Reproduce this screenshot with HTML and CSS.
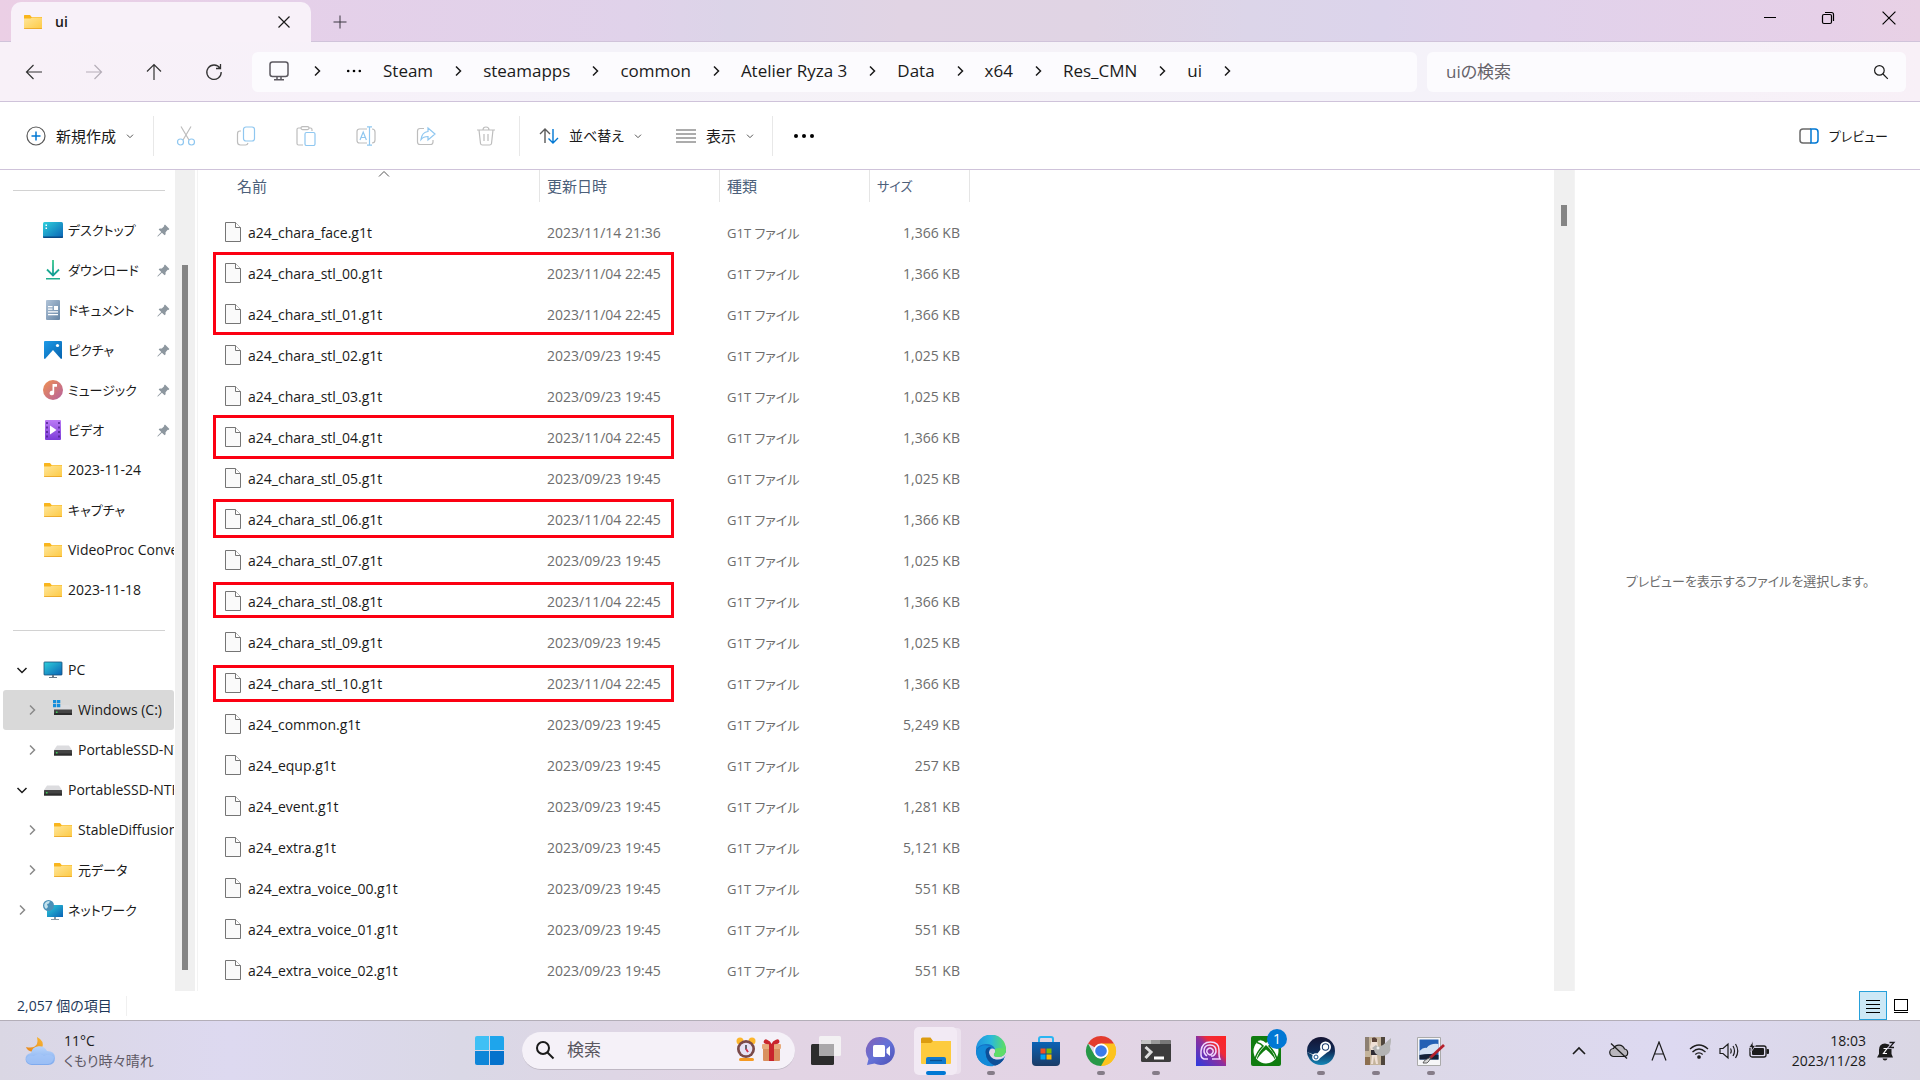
FILE: index.html
```html
<!DOCTYPE html>
<html lang="ja">
<head>
<meta charset="utf-8">
<title>ui</title>
<link rel="stylesheet" href="styles.css">
</head>
<body>
<svg class="sprite" aria-hidden="true">
  <defs>
    <linearGradient id="gFolder" x1="0" y1="0" x2="1" y2="1"><stop offset="0" stop-color="#ffe69a"/><stop offset="1" stop-color="#fdca45"/></linearGradient>
    <linearGradient id="gBlue" x1="0" y1="0" x2="1" y2="1"><stop offset="0" stop-color="#2fd0dc"/><stop offset="1" stop-color="#0a62b5"/></linearGradient>
    <linearGradient id="gPic" x1="0" y1="0" x2="1" y2="1"><stop offset="0" stop-color="#1e9be8"/><stop offset="1" stop-color="#0662ad"/></linearGradient>
    <linearGradient id="gDown" x1="0" y1="0" x2="0" y2="1"><stop offset="0" stop-color="#35c88b"/><stop offset="1" stop-color="#129c95"/></linearGradient>
    <linearGradient id="gDoc" x1="0" y1="0" x2="1" y2="1"><stop offset="0" stop-color="#b0c3d8"/><stop offset="1" stop-color="#6484a3"/></linearGradient>
    <linearGradient id="gMusic" x1="0" y1="0" x2="1" y2="1"><stop offset="0" stop-color="#f09150"/><stop offset="1" stop-color="#b5609f"/></linearGradient>
    <linearGradient id="gVideo" x1="0" y1="0" x2="0" y2="1"><stop offset="0" stop-color="#bb7bf5"/><stop offset="1" stop-color="#7c3cd8"/></linearGradient>
    <linearGradient id="gCloud" x1="0" y1="0" x2="0" y2="1"><stop offset="0" stop-color="#b9d5fb"/><stop offset="1" stop-color="#7da9ee"/></linearGradient>
    <linearGradient id="gMoon" x1="1" y1="0" x2="0" y2="1"><stop offset="0" stop-color="#f7b733"/><stop offset="1" stop-color="#e8851d"/></linearGradient>
    <linearGradient id="gEdge" x1="0" y1="0" x2="1" y2="0"><stop offset="0" stop-color="#1f93e0"/><stop offset=".5" stop-color="#2ab8dc"/><stop offset="1" stop-color="#5fe05e"/></linearGradient>
    <linearGradient id="gStore" x1="0" y1="0" x2="0" y2="1"><stop offset="0" stop-color="#0b62b5"/><stop offset="1" stop-color="#1b3c66"/></linearGradient>
    <linearGradient id="gRec" x1="0" y1="1" x2="1" y2="0"><stop offset="0" stop-color="#2b3be0"/><stop offset=".5" stop-color="#8f2f9c"/><stop offset=".65" stop-color="#ef2b38"/><stop offset="1" stop-color="#ff2424"/></linearGradient>
    <linearGradient id="gSteam" x1="0" y1="0" x2="0" y2="1"><stop offset="0" stop-color="#141433"/><stop offset=".5" stop-color="#102a55"/><stop offset="1" stop-color="#1387b8"/></linearGradient>
    <linearGradient id="gChat" x1="0" y1="0" x2="1" y2="1"><stop offset="0" stop-color="#8660b5"/><stop offset=".5" stop-color="#6472d8"/><stop offset="1" stop-color="#4c4fb5"/></linearGradient>

    <symbol id="folder" viewBox="0 0 20 16"><path d="M1 1.6Q1 1 1.6 1H7l1.6 2H19v3H1z" fill="#f9b51c"/><path d="M1 4.6h6.6L9 3.4h9.4q.6 0 .6.6v10.4q0 .6-.6.6H1.6q-.6 0-.6-.6z" fill="url(#gFolder)"/><path d="M1 14.2h18v.4q0 .4-.6.4H1.6q-.6 0-.6-.4z" fill="#e8a020"/></symbol>
    <symbol id="file" viewBox="0 0 16 20"><path d="M.5.5h10l5 5v14H.5z" fill="#fafafa" stroke="#757575"/><path d="M10.5.5v5h5" fill="#fff" stroke="#757575"/></symbol>
    <symbol id="pin" viewBox="0 0 14 14"><path d="M8.6.6l4.8 4.8-1.1 1-.7-.1-2.4 2.5.1 2.3-1.1 1.1-2.9-2.8-4 3.9-.9.3.3-.9L4.600 8.700 1.800 5.900l1.100-1.100 2.300.1 2.500-2.400-.1-.8z" fill="#8d979f"/></symbol>
    <symbol id="right" viewBox="0 0 12 12"><path d="M4 1.500 8.500 6 4 10.500" fill="none" stroke="currentColor" stroke-width="1.500"/></symbol>
    <symbol id="down" viewBox="0 0 12 12"><path d="M1.500 4 6 8.500 10.500 4" fill="none" stroke="currentColor" stroke-width="1.500"/></symbol>
    <symbol id="drive" viewBox="0 0 20 16"><path d="M4 3.500h12l3 4.500H1z" fill="#dcdcdf"/><rect x="1" y="8" width="18" height="5.500" rx=".6" fill="#444"/><rect x="1" y="11.500" width="18" height="2" fill="#2c2c2c"/><rect x="3" y="10" width="1.500" height="1.500" fill="#3fd35b"/></symbol>
    <symbol id="magnifier" viewBox="0 0 20 20"><circle cx="8" cy="8" r="6" fill="none" stroke="currentColor" stroke-width="var(--w,1.500)"/><path d="M12.500 12.500 18.500 18.500" stroke="currentColor" stroke-width="var(--w,1.500)"/></symbol>
    <symbol id="close" viewBox="0 0 12 12"><path d="M.5.5l11 11M11.500.5l-11 11" stroke="currentColor" stroke-width="1.200"/></symbol>
  </defs>
</svg>

<header class="titlebar">
  <div class="tab">
    <svg class="i20x16"><use href="#folder"/></svg>
    <span class="tab-title">ui</span>
    <button class="tab-close" aria-label="タブを閉じる"><svg class="i12"><use href="#close"/></svg></button>
  </div>
  <button class="new-tab" aria-label="新しいタブ"><svg class="i14" viewBox="0 0 14 14"><path d="M7 .5v13M.5 7h13" stroke="#3a3640"/></svg></button>
  <div class="window-controls">
    <button aria-label="最小化"><svg class="i14" viewBox="0 0 14 14"><path d="M1 6.500h12" stroke="#000"/></svg></button>
    <button aria-label="元に戻す"><svg class="i14" viewBox="0 0 14 14" fill="none" stroke="#000" stroke-width="1.200"><rect x="1.500" y="3.500" width="9" height="9" rx="1.500"/><path d="M4 1.500h6.500a2 2 0 0 1 2 2V10"/></svg></button>
    <button aria-label="閉じる"><svg class="i14" viewBox="0 0 12 12"><path d="M.5.5l11 11M11.500.5l-11 11" stroke="#000"/></svg></button>
  </div>
</header>

<nav class="navbar">
  <div class="nav-buttons">
    <button aria-label="戻る"><svg class="i18" viewBox="0 0 18 18" fill="none" stroke="#333"><path d="M17 9H2M8.500 2 1.500 9l7 7" stroke-width="1.200"/></svg></button>
    <button aria-label="進む"><svg class="i18" viewBox="0 0 18 18" fill="none" stroke="#b5aeb8"><path d="M1 9h15M9.500 2l7 7-7 7" stroke-width="1.200"/></svg></button>
    <button aria-label="上へ"><svg class="i18" viewBox="0 0 18 18" fill="none" stroke="#333"><path d="M9 17V2M2 8.500 9 1.500l7 7" stroke-width="1.200"/></svg></button>
    <button aria-label="更新"><svg class="i18" viewBox="0 0 18 18" fill="none" stroke="#333"><path d="M15 5.200A7.200 7.200 0 1 0 16.200 9M15.500 1v4.500H11" stroke-width="1.300"/></svg></button>
  </div>
  <div class="address">
    <button class="crumb-pc" aria-label="PC"><svg class="i20" viewBox="0 0 20 20" fill="none" stroke="#5c5960" stroke-width="1.500"><rect x="1" y="1" width="18" height="14.500" rx="2.500"/><path d="M8 16v2.500M12 16v2.500M5 18.800h10"/></svg></button>
    <svg class="sep-first i12"><use href="#right"/></svg>
    <button class="crumb-more" aria-label="その他"><svg class="i16" viewBox="0 0 16 4"><circle cx="2.200" cy="2" r="1.300"/><circle cx="8" cy="2" r="1.300"/><circle cx="13.800" cy="2" r="1.300"/></svg></button>
    <button class="crumb">Steam</button><svg class="sep i12"><use href="#right"/></svg>
    <button class="crumb">steamapps</button><svg class="sep i12"><use href="#right"/></svg>
    <button class="crumb">common</button><svg class="sep i12"><use href="#right"/></svg>
    <button class="crumb">Atelier Ryza 3</button><svg class="sep i12"><use href="#right"/></svg>
    <button class="crumb">Data</button><svg class="sep i12"><use href="#right"/></svg>
    <button class="crumb">x64</button><svg class="sep i12"><use href="#right"/></svg>
    <button class="crumb">Res_CMN</button><svg class="sep i12"><use href="#right"/></svg>
    <button class="crumb">ui</button><svg class="sep i12"><use href="#right"/></svg>
  </div>
  <label class="search">
    <input type="search" placeholder="uiの検索" aria-label="uiの検索">
    <svg class="i16"><use href="#magnifier"/></svg>
  </label>
</nav>

<div class="toolbar">
  <button class="tool tool-new">
    <svg class="i20" viewBox="0 0 20 20" fill="none"><circle cx="10" cy="10" r="9" stroke="#5a5a5a" stroke-width="1.200"/><path d="M10 5.500v9M5.500 10h9" stroke="#0078d4" stroke-width="1.500"/></svg>
    <span class="kanji">新規作成</span><svg class="caret"><use href="#down"/></svg>
  </button>
  <div class="tool-icons">
    <button aria-label="切り取り" disabled><svg class="i20" viewBox="0 0 20 20" fill="none" stroke-width="1.200"><path d="M5 .5 13 14M15 .5 7 14" stroke="#bdbdbd"/><circle cx="4.500" cy="16" r="3" stroke="#8fc7f0"/><circle cx="15.500" cy="16" r="3" stroke="#8fc7f0"/></svg></button>
    <button aria-label="コピー" disabled><svg class="i20" viewBox="0 0 20 20" fill="none" stroke-width="1.200"><path d="M5 5H4Q1.500 5 1.500 8v8q0 3 3 3h5q2 0 2.500-2" stroke="#bdbdbd"/><rect x="7.500" y="1" width="11" height="14" rx="2.500" stroke="#8fc7f0"/></svg></button>
    <button aria-label="貼り付け" disabled><svg class="i20" viewBox="0 0 20 20" fill="none" stroke-width="1.200"><path d="M5 2H2.500Q1 2 1 3.500v14Q1 19 2.500 19H7M13 2h1.500Q16 2 16 3.500V5" stroke="#bdbdbd"/><rect x="5" y=".6" width="8" height="3" rx="1.500" stroke="#bdbdbd"/><rect x="9" y="6.500" width="10" height="13" rx="1.500" stroke="#8fc7f0"/></svg></button>
    <button aria-label="名前の変更" disabled><svg class="i20" viewBox="0 0 20 20" fill="none" stroke-width="1.200"><path d="M11 3H3.500Q1 3 1 5.500v9Q1 17 3.500 17H11M16 3q3 0 3 3v8q0 3-3 3" stroke="#bdbdbd"/><path d="M13.500.8v18.400M11 .8h5M11 19.200h5M4 14 7.200 6l3.200 8M5 11.500h4.400" stroke="#8fc7f0"/></svg></button>
    <button aria-label="共有" disabled><svg class="i20" viewBox="0 0 20 20" fill="none" stroke-width="1.200"><path d="M8 2.500H4Q1.500 2.500 1.500 5v11q0 2.500 2.500 2.500h10.500q2.500 0 2.500-2.500v-2" stroke="#bdbdbd"/><path d="M12 2l7 6-7 6v-3.500q-4.500 0-7 3 1-7.500 7-8z" stroke="#8fc7f0"/></svg></button>
    <button aria-label="削除" disabled><svg class="i20" viewBox="0 0 20 20" fill="none" stroke="#bdbdbd" stroke-width="1.200"><path d="M1 4h18M7 4q0-3 3-3t3 3M3 4l1.500 13.500Q4.700 19 6.500 19h7q1.800 0 2-1.500L17 4M8 8v7M12 8v7"/></svg></button>
  </div>
  <div class="tool-group">
    <button class="tool"><svg class="i20" viewBox="0 0 20 20" fill="none" stroke-width="1.400"><path d="M6 17V3M1 8l5-5 5 5" stroke="#5a5a5a"/><path d="M14 3v14M9.500 12.500 14 17l5-5" stroke="#0078d4"/></svg><span>並べ替え</span><svg class="caret"><use href="#down"/></svg></button>
    <button class="tool"><svg class="i20" viewBox="0 0 20 20" stroke="#5a5a5a" stroke-width="1.200"><path d="M0 4h20M0 8h20M0 12h20M0 16h20"/></svg><span class="kanji">表示</span><svg class="caret"><use href="#down"/></svg></button>
  </div>
  <button class="tool-more" aria-label="もっと見る"><svg class="i20" viewBox="0 0 20 20"><circle cx="2" cy="10" r="2"/><circle cx="10" cy="10" r="2"/><circle cx="18" cy="10" r="2"/></svg></button>
  <button class="tool tool-preview"><svg class="i20" viewBox="0 0 20 20" fill="none" stroke-width="1.500"><path d="M12 3H4Q1 3 1 6v8q0 3 3 3h8" stroke="#6a6a6a"/><path d="M12 3h4q3 0 3 3v8q0 3-3 3h-4z" stroke="#0078d4"/></svg><span class="kana">プレビュー</span></button>
</div>

<div class="content">
  <aside class="sidebar">
    <div class="tree-pane">
      <ul class="tree">
        <li class="row"><svg class="i20" viewBox="0 0 20 20"><rect y="2" width="20" height="16" rx="1.500" fill="url(#gBlue)"/><path d="M2.500 4.500h1.500V6H2.500zM2.500 7.500h1.500V9H2.500z" fill="#fff"/><path d="M0 16.500h20v.5q0 1-1 1H1q-1 0-1-1z" fill="#0b4a86"/></svg><span class="label kana">デスクトップ</span><svg class="pin"><use href="#pin"/></svg></li>
        <li class="row"><svg class="i20" viewBox="0 0 20 20" fill="none" stroke="url(#gDown)" stroke-width="1.800"><path d="M10.010 0 10 15M4 9.500l6 6 6-6"/><path d="M3 18h14v1.500H3z" fill="#1fae8e" stroke="none"/></svg><span class="label kana">ダウンロード</span><svg class="pin"><use href="#pin"/></svg></li>
        <li class="row"><svg class="i20" viewBox="0 0 20 20"><rect x="3" width="14" height="20" rx="1" fill="url(#gDoc)"/><path d="M5 6h4.500v1.300H5zM5 8.500h4.500v1.300H5zM11 6h4v4h-4zM5 11.300h10v1.300H5zM5 14h10v1.300H5z" fill="#fff"/></svg><span class="label kana">ドキュメント</span><svg class="pin"><use href="#pin"/></svg></li>
        <li class="row"><svg class="i20" viewBox="0 0 20 20"><rect x="1" y="1" width="18" height="18" rx="1" fill="url(#gPic)"/><path d="M2 19 10 10l8 9z" fill="#fff"/><circle cx="14.500" cy="5.500" r="1.600" fill="#fff"/></svg><span class="label kana">ピクチャ</span><svg class="pin"><use href="#pin"/></svg></li>
        <li class="row"><svg class="i20" viewBox="0 0 20 20"><circle cx="10" cy="10" r="10" fill="url(#gMusic)"/><path d="M9.500 4h4.500v2.800h-2.800v6.200a2.300 2.300 0 1 1-1.700-2.200z" fill="#fff"/></svg><span class="label kana">ミュージック</span><svg class="pin"><use href="#pin"/></svg></li>
        <li class="row"><svg class="i20" viewBox="0 0 20 20"><rect x="2" width="16" height="20" rx="1" fill="url(#gVideo)"/><path d="M7 5.500 13.500 10 7 14.500z" fill="#fff"/><path d="M4 2v17M16 2v17" stroke="#4b1f8c" stroke-width="1.500" stroke-dasharray="2 2.500"/></svg><span class="label kana">ビデオ</span><svg class="pin"><use href="#pin"/></svg></li>
        <li class="row"><svg class="i20x16"><use href="#folder"/></svg><span class="label">2023-11-24</span></li>
        <li class="row"><svg class="i20x16"><use href="#folder"/></svg><span class="label kana">キャプチャ</span></li>
        <li class="row"><svg class="i20x16"><use href="#folder"/></svg><span class="label">VideoProc Converter</span></li>
        <li class="row"><svg class="i20x16"><use href="#folder"/></svg><span class="label">2023-11-18</span></li>
      </ul>
      <ul class="tree">
        <li class="row parent"><svg class="i12 open"><use href="#down"/></svg><svg class="i20" viewBox="0 0 20 20"><rect x="1" y="2" width="18" height="13" rx=".6" fill="url(#gBlue)" stroke="#1b4f78" stroke-width=".8"/><path d="M9 15h2v2h3v1H6v-1h3z" fill="#6b7a88"/></svg><span class="label">PC</span></li>
        <li class="row child selected"><svg class="i12"><use href="#right"/></svg><svg class="i20" viewBox="0 0 20 20"><path d="M4 5h12l3 4.500H1z" fill="#dcdcdf"/><rect x="1" y="9.500" width="18" height="5.500" fill="#444"/><rect x="1" y="13" width="18" height="2" fill="#2c2c2c"/><rect x="3" y="11.500" width="1.500" height="1.500" fill="#3fd35b"/><path d="M0 0h3.300v3.300H0zM4 0h3.300v3.300H4zM0 4h3.300v3.300H0zM4 4h3.300v3.300H4z" fill="#158edb"/></svg><span class="label">Windows (C:)</span></li>
        <li class="row child"><svg class="i12"><use href="#right"/></svg><svg class="i20x16"><use href="#drive"/></svg><span class="label">PortableSSD-NTFS</span></li>
        <li class="row parent"><svg class="i12 open"><use href="#down"/></svg><svg class="i20x16"><use href="#drive"/></svg><span class="label">PortableSSD-NTFS</span></li>
        <li class="row child"><svg class="i12"><use href="#right"/></svg><svg class="i20x16"><use href="#folder"/></svg><span class="label">StableDiffusion</span></li>
        <li class="row child"><svg class="i12"><use href="#right"/></svg><svg class="i20x16"><use href="#folder"/></svg><span class="label kana">元データ</span></li>
        <li class="row parent"><svg class="i12"><use href="#right"/></svg><svg class="i20" viewBox="0 0 20 20"><rect x="4" y="5" width="16" height="12" rx=".6" fill="url(#gBlue)"/><path d="M11 17h2v2h3v1H8v-1h3z" fill="#8a98a4"/><circle cx="5.500" cy="5.500" r="5.500" fill="#4a90b8"/><path d="M2 3q3-3 5-1.500-1 2.500-3 2.500l1 3-2 2Q0 6 2 3z" fill="#c3e2ee"/></svg><span class="label kana">ネットワーク</span></li>
      </ul>
    </div>
    <div class="scroll side-scroll"><div class="thumb"></div></div>
  </aside>

  <main class="list-pane">
    <div class="list">
      <table class="files">
        <colgroup><col class="c-name"><col class="c-date"><col class="c-kind"><col class="c-size"></colgroup>
        <thead><tr><th class="name"><div>名前<svg class="sort-mark" viewBox="0 0 12 8"><path d="M1 6.500 6 1.500l5 5" fill="none" stroke="#555"/></svg></div></th><th><div>更新日時</div></th><th><div>種類</div></th><th><div class="kana">サイズ</div></th></tr></thead>
        <tbody>
          <tr><td><svg class="file"><use href="#file"/></svg>a24_chara_face.g1t</td><td>2023/11/14 21:36</td><td>G1T ファイル</td><td>1,366 KB</td></tr>
          <tr><td><svg class="file"><use href="#file"/></svg>a24_chara_stl_00.g1t</td><td>2023/11/04 22:45</td><td>G1T ファイル</td><td>1,366 KB</td></tr>
          <tr><td><svg class="file"><use href="#file"/></svg>a24_chara_stl_01.g1t</td><td>2023/11/04 22:45</td><td>G1T ファイル</td><td>1,366 KB</td></tr>
          <tr><td><svg class="file"><use href="#file"/></svg>a24_chara_stl_02.g1t</td><td>2023/09/23 19:45</td><td>G1T ファイル</td><td>1,025 KB</td></tr>
          <tr><td><svg class="file"><use href="#file"/></svg>a24_chara_stl_03.g1t</td><td>2023/09/23 19:45</td><td>G1T ファイル</td><td>1,025 KB</td></tr>
          <tr><td><svg class="file"><use href="#file"/></svg>a24_chara_stl_04.g1t</td><td>2023/11/04 22:45</td><td>G1T ファイル</td><td>1,366 KB</td></tr>
          <tr><td><svg class="file"><use href="#file"/></svg>a24_chara_stl_05.g1t</td><td>2023/09/23 19:45</td><td>G1T ファイル</td><td>1,025 KB</td></tr>
          <tr><td><svg class="file"><use href="#file"/></svg>a24_chara_stl_06.g1t</td><td>2023/11/04 22:45</td><td>G1T ファイル</td><td>1,366 KB</td></tr>
          <tr><td><svg class="file"><use href="#file"/></svg>a24_chara_stl_07.g1t</td><td>2023/09/23 19:45</td><td>G1T ファイル</td><td>1,025 KB</td></tr>
          <tr><td><svg class="file"><use href="#file"/></svg>a24_chara_stl_08.g1t</td><td>2023/11/04 22:45</td><td>G1T ファイル</td><td>1,366 KB</td></tr>
          <tr><td><svg class="file"><use href="#file"/></svg>a24_chara_stl_09.g1t</td><td>2023/09/23 19:45</td><td>G1T ファイル</td><td>1,025 KB</td></tr>
          <tr><td><svg class="file"><use href="#file"/></svg>a24_chara_stl_10.g1t</td><td>2023/11/04 22:45</td><td>G1T ファイル</td><td>1,366 KB</td></tr>
          <tr><td><svg class="file"><use href="#file"/></svg>a24_common.g1t</td><td>2023/09/23 19:45</td><td>G1T ファイル</td><td>5,249 KB</td></tr>
          <tr><td><svg class="file"><use href="#file"/></svg>a24_equp.g1t</td><td>2023/09/23 19:45</td><td>G1T ファイル</td><td>257 KB</td></tr>
          <tr><td><svg class="file"><use href="#file"/></svg>a24_event.g1t</td><td>2023/09/23 19:45</td><td>G1T ファイル</td><td>1,281 KB</td></tr>
          <tr><td><svg class="file"><use href="#file"/></svg>a24_extra.g1t</td><td>2023/09/23 19:45</td><td>G1T ファイル</td><td>5,121 KB</td></tr>
          <tr><td><svg class="file"><use href="#file"/></svg>a24_extra_voice_00.g1t</td><td>2023/09/23 19:45</td><td>G1T ファイル</td><td>551 KB</td></tr>
          <tr><td><svg class="file"><use href="#file"/></svg>a24_extra_voice_01.g1t</td><td>2023/09/23 19:45</td><td>G1T ファイル</td><td>551 KB</td></tr>
          <tr><td><svg class="file"><use href="#file"/></svg>a24_extra_voice_02.g1t</td><td>2023/09/23 19:45</td><td>G1T ファイル</td><td>551 KB</td></tr>
        </tbody>
      </table>
      <div class="mark mark-00"></div>
      <div class="mark mark-04"></div>
      <div class="mark mark-06"></div>
      <div class="mark mark-08"></div>
      <div class="mark mark-10"></div>
    </div>
    <div class="scroll list-scroll"><div class="thumb"></div></div>
  </main>

  <section class="preview"><p class="kana">プレビューを表示するファイルを選択します。</p></section>
</div>

<div class="statusbar">
  <span class="count">2,057 個の項目</span>
  <div class="view-switch">
    <button class="view active" aria-label="詳細"><svg class="i16" viewBox="0 0 16 16" stroke="#000"><path d="M1 2.500h14M1 6.500h14M1 10.500h14M1 14.500h14"/></svg></button>
    <button class="view" aria-label="大アイコン"><svg class="i16" viewBox="0 0 16 16" fill="none" stroke="#000"><rect x="1.500" y="1.500" width="13" height="11"/><path d="M1 14.500h14"/></svg></button>
  </div>
</div>

<footer class="taskbar">
  <button class="weather">
    <svg class="i32" viewBox="0 0 32 32"><path d="M13 2q8 4 5 11-2 5-9 4Q3 16 2 12q8 2 11-3 1-3 0-7z" fill="url(#gMoon)"/><path d="M8 30a6 6 0 0 1-1-12 8.500 8.500 0 0 1 16-2q8 0 8 7t-7 7z" fill="url(#gCloud)"/><path d="M2 24q2-5 8-3 5-4 10 0 5-3 10 1-1 7-6 7H8q-5 0-6-5z" fill="#a5c6f8" opacity=".7"/></svg>
    <span class="two-line"><span>11°C</span><span class="sub">くもり時々晴れ</span></span>
  </button>

  <div class="apps">
    <button class="start" aria-label="スタート"><svg viewBox="0 0 30 30"><path d="M2 0h12.500v14.500H0V2q0-2 2-2z" fill="#3fc0f5"/><path d="M15.500 0H28q2 0 2 2v12.500H15.500z" fill="#1ea5ec"/><path d="M0 15.500h14.500V30H2q-2 0-2-2z" fill="#0f86d8"/><path d="M15.500 15.500H30V28q0 2-2 2H15.500z" fill="#0572cc"/></svg></button>
    <label class="task-search">
      <svg class="i20"><use href="#magnifier"/></svg>
      <input type="search" placeholder="検索" aria-label="検索">
      <svg class="holiday" viewBox="0 0 46 26"><circle cx="4" cy="4" r="3.500" fill="#fcb62d"/><circle cx="16" cy="4" r="3.500" fill="#fcb62d"/><rect x="3" y="21" width="15" height="3" rx="1.500" fill="#f59a23"/><circle cx="10" cy="12" r="9" fill="#7a4a4a"/><circle cx="10" cy="12" r="6.300" fill="#e6e2f5"/><path d="M10 8v4l2 3" stroke="#222" fill="none" stroke-width="1.300"/><path d="M10 12l2 3" stroke="#e03050" stroke-width="1.500"/><rect x="27" y="10" width="17" height="14" rx="1" fill="#d9905f"/><rect x="26" y="7" width="19" height="5" rx="1" fill="#e8ab7d"/><rect x="33" y="7" width="5" height="17" fill="#c9252d"/><path d="M35.500 7q-7 1-8-2 1-4 4-2 3 1 4 4 1-3 4-4 4-2 4 2-1 3-8 2z" fill="#c9252d"/></svg>
    </label>
    <button class="app" aria-label="タスク ビュー"><svg class="i32" viewBox="0 0 32 32"><rect x="1" y="9" width="23" height="21" rx="1.500" fill="#2c2c2c"/><rect x="9" y="1" width="22" height="20" rx="1.500" fill="#f3f1f3"/><path d="M9 9h15v12H10.500q-1.500 0-1.500-1.500z" fill="#aaa8aa"/></svg></button>
    <button class="app" aria-label="チャット"><svg class="i32" viewBox="0 0 32 32"><path d="M16 2a14 14 0 1 1-6.500 26.500L2 30l1.500-6A14 14 0 0 1 16 2z" fill="url(#gChat)"/><rect x="8" y="10" width="12" height="12" rx="1.500" fill="#fff"/><path d="M21.500 14l3.500-3v10l-3.500-3z" fill="#fff"/></svg></button>
    <button class="app current" aria-label="エクスプローラー"><svg class="i32" viewBox="0 0 32 32"><path d="M1 4q0-1.500 1.500-1.500h8L13 6h17v5H1z" fill="#dc9c10"/><path d="M1 8h10l2-2h18v22q0 1-1 1H2q-1 0-1-1z" fill="#fdcb3e"/><path d="M6 29v-5q0-2 2-2h16q2 0 2 2v5z" fill="#1079cd"/><path d="M10 25.500h12" stroke="#0b4f8e" stroke-width="1.300"/></svg></button>
    <button class="app running" aria-label="Microsoft Edge"><svg class="i32" viewBox="0 0 32 32"><circle cx="16" cy="16" r="15" fill="#1473c8"/><path d="M1 15A15 15 0 0 1 31 14q0 8-8 8-5 0-4-3 2-2 1-5-2-5-9-5-7 0-10 6z" fill="url(#gEdge)"/><path d="M10.500 17q0-4 5-5-5-3-10-.5Q1 14 1.200 18 2 26 10 30q5 2 9 .7-8-3.700-8.500-13.700z" fill="#128ad8"/><path d="M10.500 17q.5 10 9.500 13.700Q26 29 29 24l-1-.8q-3 1.800-7 1.300-6-1-7-7 0-4 2-5.500-5.500 0-5.500 5z" fill="#0e4f98"/><path d="M14 17.500q1 6 7 7 4 .5 7-1.300l3-3V17l-2 3q-2 2-6 2-5 0-4-3 2-2 .5-5-4.500-2-5.500 3.500z" fill="#e3d5e6"/><path d="M20 14q3-2 11 0 0 8-8 8-5 0-4-3 2-2 1-5z" fill="#5fdc68"/></svg></button>
    <button class="app" aria-label="Microsoft Store"><svg class="i32" viewBox="0 0 32 32"><path d="M9 8V4q0-2 2-2h10q2 0 2 2v4" fill="none" stroke="#2bb5f2" stroke-width="2"/><path d="M2 7h28v20q0 4-4 4H6q-4 0-4-4z" fill="url(#gStore)"/><path d="M10.500 13.500h5v5h-5z" fill="#f25022"/><path d="M16.500 13.500h5v5h-5z" fill="#7fba00"/><path d="M10.500 19.500h5v5h-5z" fill="#00a4ef"/><path d="M16.500 19.500h5v5h-5z" fill="#ffb900"/></svg></button>
    <button class="app running" aria-label="Google Chrome"><svg class="i32" viewBox="0 0 32 32"><path d="M16 16 3 8.500A15 15 0 0 1 29 8.500z" fill="#e33b2e"/><path d="M16 16 29 8.500a15 15 0 0 1-13 22.500z" fill="#fcc31e"/><path d="M16 8.500h13q2 3 2 7.500a15 15 0 0 1-15 15l6.500-11.500z" fill="#fcc31e"/><path d="M16 31A15 15 0 0 1 3 8.500L9.500 20q3 4 6.500 3.500l6-3z" fill="#279847"/><circle cx="16" cy="16" r="7.500" fill="#fff"/><circle cx="16" cy="16" r="5.800" fill="#3b7bea"/></svg></button>
    <button class="app running" aria-label="ターミナル"><svg class="i32" viewBox="0 0 32 32"><rect x="1" y="5" width="30" height="22" rx="1.500" fill="#3c3c3c"/><path d="M2.500 5H11v4H1V6.500Q1 5 2.500 5z" fill="#c4c4c4"/><path d="M11 5h9v4h-9z" fill="#9a9a9a"/><path d="M20 5h9.500Q31 5 31 6.500V9H20z" fill="#777"/><path d="M5.500 12l5.500 5-5.500 6" fill="none" stroke="#ddd" stroke-width="3"/><path d="M14 23h10" stroke="#fff" stroke-width="3"/></svg></button>
    <button class="app" aria-label="レコーダー"><svg class="i32" viewBox="0 0 32 32"><path d="M1 1h30v30H1z" fill="url(#gRec)"/><g fill="none" stroke="#f0d8ff" stroke-width="1.500"><path d="M13 24H9q-3-1-3-4v-4q1-9 9.500-9T24 15v4q0 3 1 5h-8"/><path d="M12 21q-3-2-3-5 0-6 6-6t6 6q0 3-3 5h-2"/><path d="M13 19q-2-2-1-4 3-4 6 0 1 3-3 5z"/></g></svg></button>
    <button class="app" aria-label="Xbox"><svg class="i32" viewBox="0 0 32 32"><rect x="1" y="1" width="30" height="30" rx="2" fill="#107c10"/><circle cx="16" cy="16" r="12.500" fill="#fff"/><path d="M8 6q4-2 8 2 4-4 8-2-4-3.500-8-3.500T8 6z" fill="#107c10"/><path d="M6.500 25.500q1-8 9.500-15.500 8.500 7.500 9.500 15.500-3-6-9.500-11-6.500 5-9.500 11z" fill="#107c10"/><path d="M7 7.500q4 1 6 3.500-6 6-8 13M25 7.500q-4 1-6 3.500 6 6 8 13" fill="none" stroke="#107c10" stroke-width="1.500"/></svg><span class="badge">1</span></button>
    <button class="app running" aria-label="Steam"><svg class="i32" viewBox="0 0 32 32"><circle cx="16" cy="16" r="14" fill="url(#gSteam)"/><path d="M2 17l9 3.500 6-8 5 5-7.500 6" fill="#fff"/><circle cx="20.500" cy="12" r="5.500" fill="#fff"/><circle cx="20.500" cy="12" r="3.700" fill="#18386a"/><circle cx="20.500" cy="12" r="2.700" fill="#fff"/><circle cx="11" cy="22" r="3.800" fill="#fff"/><circle cx="11" cy="22" r="2" fill="none" stroke="#17518a"/></svg></button>
    <button class="app running" aria-label="GIMP"><svg class="i32" viewBox="0 0 32 32"><path d="M5 2h20v28H5z" fill="#c4b49c"/><path d="M5 2h4v14H5z" fill="#8d8072"/><path d="M21 2h4v28h-4z" fill="#4f463c"/><path d="M5 22h5v8H5z" fill="#8c6f4f"/><path d="M12 3q3-2 5 1l1 8-1 8 1 9h-2l-2-8-1 8h-2l1-9-2-8z" fill="#efe0d6"/><path d="M12 3q3-2 5 1v3h-5z" fill="#5a4238"/><path d="M11 15h8l1 5h-9z" fill="#2e2b33"/><path d="M12 13l4-3 2 2 5-2 8-7q0 6-1 8 2 8-7 10-8 0-9-6z" fill="#b3b3b3"/><circle cx="18" cy="13" r="1.500" fill="#eee"/></svg></button>
    <button class="app running" aria-label="ペイント"><svg class="i32" viewBox="0 0 32 32"><path d="M2.500 2.500h23v28h-23z" fill="#f6f6f8" stroke="#aaa"/><path d="M4.500 4.500h19v20h-19z" fill="#2460b4"/><path d="M4.500 16q4-4 7-3 4-5 12-4v8q-8 3-19 3z" fill="#d5e2f3"/><path d="M4.500 20q10-2 19 0v4.500h-19z" fill="#152238"/><path d="M29 10 15 23" stroke="#b5202c" stroke-width="2.800"/><path d="M16 22l-4 2q-3 1-4 4 5 1 6-2z" fill="#d8d8d8" stroke="#444" stroke-width=".8"/></svg></button>
  </div>

  <div class="tray">
    <button class="tray-item" aria-label="隠れているインジケーター"><svg class="i14" viewBox="0 0 14 14" fill="none" stroke="#1b1b1b" stroke-width="1.600"><path d="M1 10l6-6 6 6"/></svg></button>
    <button class="tray-item" aria-label="OneDrive"><svg class="i20" viewBox="0 0 20 20" fill="#b9b6bd" stroke="#1b1b1b" stroke-width="1.200"><path d="M5 15.500a4 4 0 0 1-.5-8A6 6 0 0 1 15.500 8a3.800 3.800 0 0 1 0 7.500z"/><path d="M2 2.500l16 15"/></svg></button>
    <button class="tray-item" aria-label="入力モード"><svg class="i20" viewBox="0 0 20 20" fill="none" stroke="#1b1b1b" stroke-width="1.200"><path d="M3 19.500 10 1l7 18.500M5.500 13h9"/></svg></button>
    <button class="tray-status" aria-label="ネットワーク、音量、電源">
      <svg class="i20" viewBox="0 0 20 20" fill="none" stroke="#1b1b1b" stroke-width="1.300"><path d="M1 8q9-8 18 0M3.500 11q6.500-6 13 0M6.300 13.500q3.700-3.300 7.400 0"/><circle cx="10" cy="16" r="1.200" fill="#1b1b1b"/></svg>
      <svg class="i20" viewBox="0 0 20 20" fill="none" stroke="#1b1b1b" stroke-width="1.200"><path d="M1 7.500h3L9 3v14l-5-4.500H1zM11.500 7.500q1.500 2.500 0 5M14 5q3 5 0 10M16.500 3q4.500 7 0 14"/></svg>
      <svg class="i20" viewBox="0 0 20 20"><rect x="1" y="5" width="16" height="11" rx="2" fill="none" stroke="#1b1b1b" stroke-width="1.300"/><rect x="3" y="7" width="12" height="7" rx="1" fill="#1b1b1b"/><rect x="17.500" y="8" width="2.500" height="5" rx="1" fill="#1b1b1b"/><path d="M4 0 0 6.500h2.500L2 11l4.500-6.500H4z" fill="#1b1b1b" stroke="#ddd8ee" stroke-width=".8"/></svg>
    </button>
    <button class="clock two-line"><span>18:03</span><span>2023/11/28</span></button>
    <button class="tray-bell" aria-label="通知"><svg class="i20" viewBox="0 0 20 20"><path d="M9 2.500q-6 0-6 6.500v4l-2 3.500h16L15.500 13V6L13 3.500z" fill="#1b1b1b"/><path d="M6.500 17.500h5q-.5 2-2.500 2t-2.500-2z" fill="#1b1b1b"/><path d="M7.500 7.500h3.500l-3.500 5H11" fill="none" stroke="#fff" stroke-width="1.200"/><path d="M13.500 1.500h4.500l-4.500 5H18" fill="none" stroke="#ddd8ee" stroke-width="3"/><path d="M13.500 1.500h4.500l-4.500 5H18" fill="none" stroke="#1b1b1b" stroke-width="1.300"/></svg></button>
  </div>
</footer>
</body>
</html>
```
FILE: styles.css
```css
* { box-sizing: border-box; }

body {
  margin: 0;
  height: 100vh;
  display: flex;
  flex-direction: column;
  overflow: hidden;
  background: #fff;
  color: #1a1a1a;
  font-family: "Open Sans", "Noto Sans CJK JP", sans-serif;
  font-size: 14px;
  line-height: 20px;
  font-feature-settings: "palt";
}

button {
  border: 0;
  padding: 0;
  background: none;
  color: inherit;
  font: inherit;
  font-feature-settings: inherit;
  display: flex;
  align-items: center;
  justify-content: center;
}

input {
  border: 0;
  padding: 0;
  background: none;
  font: inherit;
  font-feature-settings: inherit;
  outline: none;
  flex: 1;
  min-width: 0;
}

ul { list-style: none; margin: 0; padding: 0; }
svg { flex: none; display: block; }
.sprite { position: absolute; width: 0; height: 0; }
.i12 { width: 12px; height: 12px; }
.i14 { width: 14px; height: 14px; }
.i16 { width: 16px; height: 16px; }
.i18 { width: 18px; height: 18px; }
.i20 { width: 20px; height: 20px; }
.i32 { width: 32px; height: 32px; }
.i20x16 { width: 20px; height: 16px; }

/* Katakana runs wide beside the Latin text, kanji a little small */
.kana { font-size: 13px; }
.kanji { font-size: 15px; }

/* Title bar */
.titlebar {
  height: 42px;
  flex: none;
  display: flex;
  padding-left: 11px;
  border-bottom: 1px solid #d0c3da;
  background: linear-gradient(90deg, #ebcfe5 0, #e5d0e9 15%, #e0d2ea 33%, #dcd4e8 38%, #e1d4e4 47%, #e0d4e4 57%, #dcd5e9 65%, #dcd4eb 72%, #e1d2eb 80%, #e6d0e8 95%, #e8d1e5 100%);
}
.tab {
  width: 300px;
  height: 40px;
  margin-top: 2px;
  padding: 0 21px 0 12px;
  display: flex;
  align-items: center;
  border-radius: 10px 10px 0 0;
  background: #f8f1f9;
}
.tab-title { margin-left: 12px; font-weight: 600; }
.tab-close { margin-left: auto; }
.new-tab { width: 58px; height: 44px; }
.window-controls { margin-left: auto; display: flex; height: 36px; }
.window-controls button { width: 58px; }
.window-controls button:last-child { width: 63px; }

/* Navigation row */
.navbar {
  height: 60px;
  flex: none;
  display: flex;
  align-items: center;
  gap: 10px;
  padding-right: 14px;
  border-bottom: 1px solid #cfc3da;
  background: linear-gradient(90deg, #f8f1f8 0, #f7f1f9 18%, #f4f2f9 32%, #f6f2f7 47%, #f4f2f9 66%, #f5f2f9 80%, #f8f0f7 100%);
}
.nav-buttons { width: 242px; padding-left: 4px; display: flex; }
.nav-buttons button { width: 60px; height: 40px; flex: none; }
.address, .search {
  height: 40px;
  display: flex;
  align-items: center;
  border-radius: 6px;
  background: #fcfbfe;
  font-size: 17px;
}
.address { flex: 1; min-width: 0; padding-bottom: 1px; }
.crumb-pc { width: 54px; }
.sep-first { margin: 0 5px; }
.crumb-more { width: 51px; margin-right: 4px; }
.sep { margin: 0 19px; }
.search { width: 479px; padding: 0 17px 0 19px; }
.search input::placeholder { color: #66636a; opacity: 1; }

/* Command bar */
.toolbar {
  height: 68px;
  flex: none;
  display: flex;
  align-items: center;
  padding: 0 32px 0 26px;
  border-bottom: 1px solid #cfc3da;
}
.tool { gap: 10px; }
.caret { width: 8px; height: 8px; color: #555; }
.tool-new { width: 127px; justify-content: flex-start; }
.tool-icons, .tool-group {
  display: flex;
  align-items: center;
  height: 40px;
  border-left: 1px solid #e8e8e8;
}
.tool-icons { width: 366px; padding-left: 2px; }
.tool-icons button { width: 60px; }
.tool-group { width: 254px; gap: 34px; padding-left: 19px; border-right: 1px solid #e8e8e8; }
.tool-more { width: 61px; }
.tool-preview { margin-left: auto; }

/* Folder tree */
.content { flex: 1; min-height: 0; display: flex; }
.sidebar { width: 198px; flex: none; display: flex; border-right: 1px solid #f3f3f3; }
.tree-pane { width: 175px; padding-top: 20px; overflow: hidden; }
.tree { padding-top: 20px; }
.tree + .tree { margin-top: 20px; }
.tree::before {
  content: "";
  display: block;
  height: 1px;
  margin: -20px 10px 19px 13px;
  background: #d2d2d2;
}
.row {
  height: 40px;
  margin: 0 1px 0 3px;
  padding: 0 4px 0 40px;
  display: flex;
  align-items: center;
  gap: 5px;
  overflow: hidden;
  border-radius: 3px;
  white-space: nowrap;
}
.row.parent { padding: 0 0 0 13px; }
.row.child { padding: 0 0 0 23px; }
.row .i12 { color: #8a8a8a; margin-right: 10px; }
.row .open { color: #1a1a1a; }
.row.selected { background: #d9d9d9; }
.pin { width: 13px; height: 13px; margin-left: auto; }

.scroll { width: 20px; flex: none; background: #f0f0f0; display: flex; flex-direction: column; align-items: center; }
.thumb { width: 6px; background: #858585; }
.side-scroll { padding: 95px 0 21px; }
.side-scroll .thumb { flex: 1; }
.list-scroll { padding-top: 35px; }
.list-scroll .thumb { height: 21px; }

/* File list */
.list-pane { flex: 1; min-width: 0; display: flex; border-right: 1px solid #f3f3f3; }
.list { flex: 1; position: relative; overflow: hidden; }
.files { border-collapse: collapse; table-layout: fixed; width: 772px; white-space: nowrap; }
.c-name { width: 342px; }
.c-date { width: 180px; }
.c-kind { width: 150px; }
.c-size { width: 100px; }
.files th { padding: 0; height: 42px; vertical-align: top; text-align: left; font-size: 15px; font-weight: 400; color: #4c607a; }
.files th div { height: 32px; padding: 6px 0 0 7px; border-right: 1px solid #e5e5e5; }
.files th.name div { padding-left: 39px; position: relative; }
.sort-mark { position: absolute; top: 0; left: 50%; width: 12px; height: 8px; margin-left: 9px; }
.files td { height: 41px; padding: 0 0 0 7px; color: #6d6d6d; }
.files td:first-child { padding-left: 27px; color: #1a1a1a; }
.files td:nth-child(3) { font-size: 13px; }
.files td:last-child { padding-right: 10px; text-align: right; }
.file { display: inline-block; width: 16px; height: 20px; margin-right: 7px; vertical-align: -4px; }

/* Red annotation frames drawn over the rows */
.mark { position: absolute; left: 15px; width: 461px; border: 3px solid #fc0012; }
.mark-00 { top: 82px; height: 83px; }
.mark-04 { top: 245px; height: 44px; }
.mark-06 { top: 329px; height: 39px; }
.mark-08 { top: 412px; height: 36px; }
.mark-10 { top: 495px; height: 37px; }

.preview { width: 345px; flex: none; display: flex; align-items: center; justify-content: center; color: #6d6d6d; }
.preview p { margin: 0; }

/* Status bar */
.statusbar { height: 29px; flex: none; display: flex; align-items: center; padding: 0 9px 0 17px; }
.count { color: #1e395b; padding-right: 14px; border-right: 1px solid #f0f0f0; }
.view-switch { margin-left: auto; display: flex; gap: 4px; }
.view { width: 20px; height: 29px; }
.view.active { width: 28px; background: #cce8f6; border: 1px solid #26a0da; }

/* Taskbar */
.taskbar {
  height: 60px;
  flex: none;
  display: flex;
  justify-content: space-between;
  border-top: 1px solid #b3aeb8;
  background: linear-gradient(90deg, #dad7e4 0, #ddd9f0 12%, #dad8e6 24%, #e2d4e4 40%, #e3d4e5 57%, #dcd8e6 72%, #ddd9f1 87%, #dad7e4 100%);
}
.weather { width: 475px; padding-left: 24px; gap: 8px; justify-content: flex-start; }
.two-line { display: flex; flex-direction: column; align-items: flex-start; justify-content: center; }
.sub { color: #5f5a66; }
.apps { flex: 1; display: flex; align-items: center; }
.start { width: 29px; height: 29px; margin-right: 18px; }
.start svg { width: 29px; height: 29px; }
.task-search {
  width: 273px;
  height: 38px;
  margin-right: 3px;
  padding: 0 13px;
  display: flex;
  align-items: center;
  gap: 12px;
  border-radius: 19px;
  border-bottom: 1px solid #bfb8c4;
  background: #f5f1f8;
  font-size: 17px;
  --w: 2;
}
.task-search input::placeholder { color: #5a5760; opacity: 1; }
.holiday { width: 46px; height: 26px; }
.app { width: 55px; height: 48px; position: relative; }
.app.current { width: 43px; margin: 0 6px; border-radius: 5px; background: #f2eaf4; box-shadow: 5px 0 0 -1px #ece2ee; }
.app.running::after, .app.current::after {
  content: "";
  position: absolute;
  bottom: 0;
  left: 50%;
  width: 8px;
  height: 4px;
  margin-left: -4px;
  border-radius: 2px;
  background: #857c88;
}
.app.current::after { width: 20px; margin-left: -10px; background: #0078d4; }
.badge {
  position: absolute;
  top: 2px;
  right: 6px;
  width: 20px;
  height: 20px;
  border-radius: 10px;
  background: #0078d4;
  color: #fff;
}
.tray { display: flex; align-items: stretch; padding-right: 24px; }
.tray-item { width: 40px; }
.tray-status { gap: 10px; padding: 0 10px; }
.clock.two-line { width: 87px; align-items: flex-end; }
.tray-bell { width: 20px; margin-left: 10px; }
```
